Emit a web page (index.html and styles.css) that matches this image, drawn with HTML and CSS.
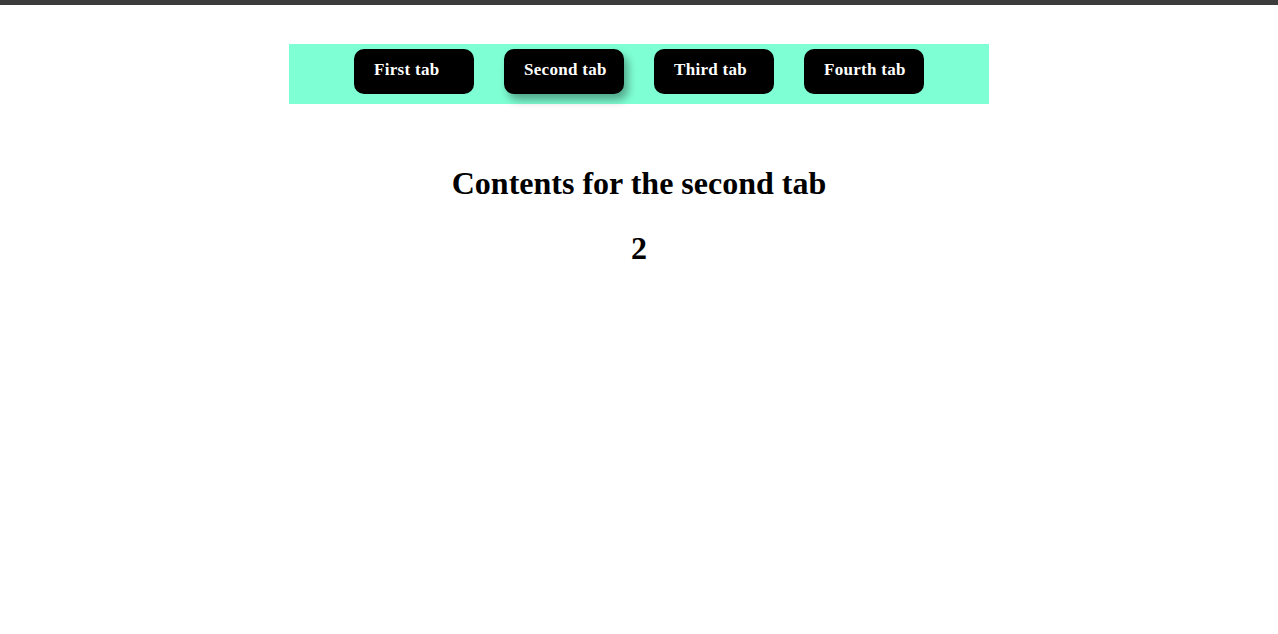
FILE: index.html
```html
<!DOCTYPE html>
<html>
<head>
<meta charset="utf-8">
<link rel="stylesheet" href="styles.css">
</head>
<body>
<div class="topbar"></div>
<div class="page">
  <nav class="tabs">
    <button class="tab">First tab</button>
    <button class="tab active">Second tab</button>
    <button class="tab">Third tab</button>
    <button class="tab">Fourth tab</button>
  </nav>
  <section class="content">
    <h1 class="title">Contents for the second tab</h1>
    <h1 class="number">2</h1>
  </section>
</div>
</body>
</html>
```

FILE: styles.css
```css
html, body {
  margin: 0;
  padding: 0;
  background: #ffffff;
  font-family: "Liberation Serif", "Times New Roman", serif;
}
.topbar {
  height: 5px;
  background: #3c3c3c;
}
.page {
  padding-top: 39px;
}
.tabs {
  width: 700px;
  height: 60px;
  margin: 0 auto;
  background: #7fffd4;
  display: flex;
  justify-content: center;
  align-items: flex-start;
  gap: 30px;
  padding-top: 5px;
  box-sizing: border-box;
}
.tab {
  width: 120px;
  height: 45px;
  background: #000000;
  color: #ffffff;
  border: none;
  border-radius: 10px;
  font-family: "Liberation Serif", "Times New Roman", serif;
  font-weight: bold;
  font-size: 17px;
  letter-spacing: 0.3px;
  white-space: nowrap;
  text-align: left;
  padding: 11px 0 0 20px;
  box-sizing: border-box;
  display: flex;
  align-items: flex-start;
}
.tab.active {
  box-shadow: 4px 6px 8px rgba(0, 0, 0, 0.35);
}
.content {
  text-align: center;
  padding-top: 40px;
}
.title, .number {
  font-size: 32px;
  font-weight: bold;
  margin: 21px 0;
}
.title {
  margin-bottom: 28px;
}
```
